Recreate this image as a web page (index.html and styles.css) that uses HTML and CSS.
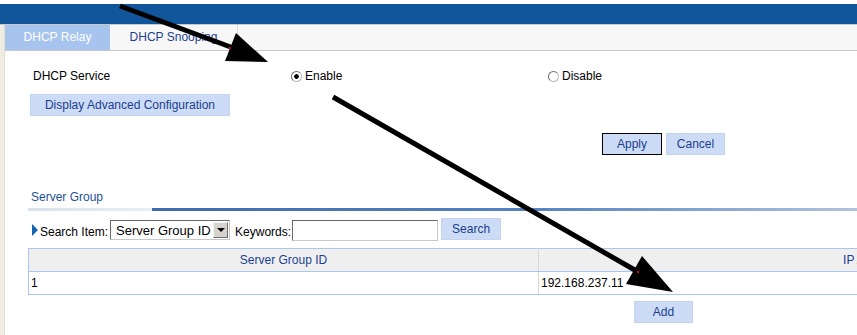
FILE: index.html
```html
<!DOCTYPE html>
<html>
<head>
    <title>DHCP</title>
    <link rel="stylesheet" href="styles.css">
</head>
<body>
    <div class="topbar"></div>
    <div class="page">
        <div class="side"></div>
        <div class="main">
            <div class="tabs">
                <div class="tab active">DHCP Relay</div>
                <div class="tab">DHCP Snooping</div>
            </div>

            <div class="content">
                <div class="service-row">
                    <span class="label">DHCP Service</span>
                    <label class="radio-item"><input type="radio" name="svc" checked> Enable</label>
                    <label class="radio-item"><input type="radio" name="svc"> Disable</label>
                </div>

                <button class="btn btn-wide">Display Advanced Configuration</button>

                <div class="actions">
                    <button class="btn btn-focus">Apply</button>
                    <button class="btn">Cancel</button>
                </div>

                <div class="section-title">Server Group</div>
                <div class="section-bar"></div>

                <div class="search-row">
                    <span class="marker"></span>
                    <span class="search-label">Search Item:</span>
                    <span class="select">
                        <span class="select-value">Server Group ID</span>
                        <span class="select-arrow"></span>
                    </span>
                    <span class="search-label">Keywords:</span>
                    <input class="keyword" type="text">
                    <button class="btn btn-search">Search</button>
                </div>

                <table class="grid">
                    <thead>
                        <tr>
                            <th class="col-id">Server Group ID</th>
                            <th class="col-ip">IP Address</th>
                            <th>Operation</th>
                        </tr>
                    </thead>
                    <tbody>
                        <tr>
                            <td>1</td>
                            <td>192.168.237.11</td>
                            <td></td>
                        </tr>
                    </tbody>
                </table>

                <div class="actions actions-add">
                    <button class="btn">Add</button>
                </div>
            </div>
        </div>
    </div>

    <!-- annotation arrows drawn over the screenshot -->
    <svg class="arrows" width="857" height="335" viewBox="0 0 857 335">
        <line x1="120" y1="6" x2="236" y2="49" stroke="#000" stroke-width="5"/>
        <polygon points="268,62 225,61 236,33" fill="#000"/>
        <rect x="229" y="47" width="2" height="2" fill="#d00010"/>
        <line x1="333" y1="97" x2="640" y2="273" stroke="#000" stroke-width="5"/>
        <polygon points="673,292 626,284 642,256" fill="#000"/>
        <rect x="637" y="271" width="2" height="2" fill="#d00010"/>
    </svg>
</body>
</html>
```

FILE: styles.css
```css
html, body {
    margin: 0;
    padding: 0;
}

body {
    font-family: "Liberation Sans", Arial, sans-serif;
    font-size: 12px;
    color: #000;
    background: #fff;
    width: 857px;
    height: 335px;
    overflow: hidden;
    position: relative;
}

.topbar {
    margin-top: 4px;
    height: 20px;
    background: #11559b;
    border-bottom: 1px solid #c9c9c9;
}

.page {
    display: flex;
    height: 310px;
}

.side {
    flex: 0 0 4px;
    background: #f0ece3;
    border-right: 1px solid #e2ded4;
}

.main {
    flex: 1;
}

/* Tabs */
.tabs {
    display: flex;
    height: 25px;
    background: #f7f7f7;
    border-bottom: 1px solid #c8c8c8;
}

.tab {
    width: 128px;
    line-height: 25px;
    text-align: center;
    color: #1c3f93;
    font-size: 12px;
    border-right: 1px solid #dadada;
    box-sizing: border-box;
}

.tab.active {
    width: 105px;
    background: #a6c4ee;
    color: #fff;
    border-right: none;
}

/* Content */
.content {
    padding-left: 23px;
    width: 1271px;
}

.service-row {
    display: grid;
    grid-template-columns: 258px 257px auto;
    margin-top: 18px;
    padding-left: 5px;
    line-height: 14px;
}

.radio-item {
    display: flex;
    align-items: center;
    gap: 3px;
}

.radio-item input {
    appearance: none;
    -webkit-appearance: none;
    width: 11px;
    height: 11px;
    margin: 0;
    border: 1px solid;
    border-color: #6e6e6e #b8b8b8 #b8b8b8 #6e6e6e;
    border-radius: 50%;
    background: #fff;
    box-sizing: border-box;
}

.radio-item input:checked {
    background: radial-gradient(circle, #000 0 2px, #fff 2.6px);
}

.btn {
    font-family: "Liberation Sans", Arial, sans-serif;
    font-size: 12px;
    color: #1c3c8c;
    background: #ccdcf6;
    border: 1px solid #c3d3f0;
    height: 22px;
    width: 59px;
    padding: 0;
    box-sizing: border-box;
}

.btn-wide {
    display: block;
    width: 200px;
    margin-top: 11px;
    margin-left: 2px;
}

.btn-focus {
    border-color: #000;
    width: 60px;
}

.actions {
    display: flex;
    justify-content: center;
    gap: 4px;
    margin-top: 17px;
}

/* Server group section */
.section-title {
    margin-top: 35px;
    padding-left: 3px;
    line-height: 14px;
    color: #1f4f9a;
}

.section-bar {
    height: 3px;
    margin-top: 4px;
    background: linear-gradient(to right, #d8e2f0 0, #e8eef7 124px, #3c6caf 124px, #5383c0 500px, #b0c3df 829px, #dfe7f2 1271px);
}

.search-row {
    display: flex;
    align-items: center;
    margin-top: 8px;
    height: 22px;
}

.marker {
    width: 0;
    height: 0;
    margin-left: 4px;
    border-top: 6px solid transparent;
    border-bottom: 6px solid transparent;
    border-left: 6px solid #1464b4;
}

.search-label {
    margin-left: 2px;
    margin-top: 3px;
}

.select {
    display: flex;
    align-items: center;
    width: 120px;
    height: 20px;
    margin-left: 2px;
    margin-right: 3px;
    border: 1px solid;
    border-color: #6a6a6a #c8c8c8 #c8c8c8 #6a6a6a;
    box-sizing: border-box;
    background: #fff;
}

.select-value {
    flex: 1;
    font-size: 13px;
    padding-left: 5px;
    white-space: nowrap;
}

.select-arrow {
    position: relative;
    width: 15px;
    height: 16px;
    margin-right: 1px;
    background: #d6d3cc;
    border: 1px solid;
    border-color: #f4f4f4 #707070 #707070 #f4f4f4;
    box-sizing: border-box;
}

.select-arrow::after {
    content: "";
    position: absolute;
    left: 3px;
    top: 5px;
    border-left: 4px solid transparent;
    border-right: 4px solid transparent;
    border-top: 4px solid #000;
}

.keyword {
    width: 146px;
    height: 21px;
    margin: 0 0 0 1px;
    border: 1px solid;
    border-color: #6a6a6a #c8c8c8 #c8c8c8 #6a6a6a;
    box-sizing: border-box;
}

.btn-search {
    margin-left: 3px;
    margin-top: -2px;
    width: 60px;
}

/* Table */
.grid {
    width: 1271px;
    margin-top: 7px;
    border-collapse: collapse;
    border: 1px solid #a9c6ee;
    table-layout: fixed;
}

.grid th {
    height: 22px;
    padding: 0;
    background: #efefef;
    color: #1c3f93;
    font-weight: normal;
    border-bottom: 1px solid #a9c6ee;
    text-align: center;
}

.grid td {
    height: 22px;
    padding: 0 0 0 2px;
    border-bottom: 1px solid #a9c6ee;
    text-align: left;
}

.grid .col-id {
    width: 509px;
}

.grid .col-ip {
    width: 666px;
}

.grid th + th,
.grid td + td {
    border-left: 1px solid #d8d8d8;
}

.actions-add {
    margin-top: 6px;
}

.arrows {
    position: absolute;
    top: 0;
    left: 0;
    pointer-events: none;
}
```
